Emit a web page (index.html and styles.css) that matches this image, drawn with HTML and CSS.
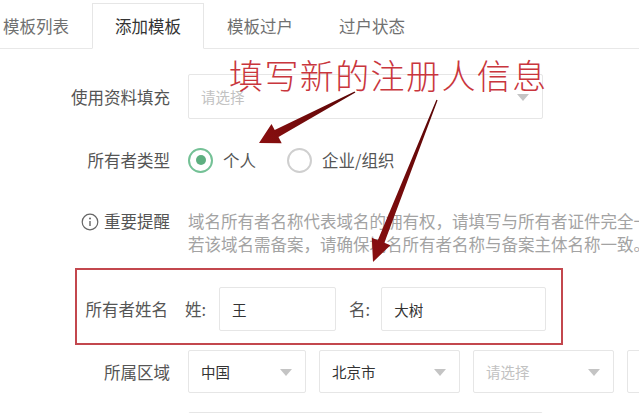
FILE: index.html
```html
<!DOCTYPE html>
<html lang="zh-CN">
<head>
<meta charset="utf-8">
<title>添加模板</title>
<link rel="stylesheet" href="styles.css">
</head>
<body>
<div class="page">
  <nav class="tabs">
    <div class="tab">模板列表</div>
    <div class="tab active">添加模板</div>
    <div class="tab">模板过户</div>
    <div class="tab">过户状态</div>
  </nav>

  <div class="form">
    <div class="row r-fill">
      <div class="label">使用资料填充</div>
      <div class="select s-wide"><span class="placeholder">请选择</span><i class="caret"></i></div>
    </div>

    <div class="row r-type">
      <div class="label">所有者类型</div>
      <div class="radios">
        <span class="radio checked"></span><span class="radio-text">个人</span>
        <span class="radio"></span><span class="radio-text">企业/组织</span>
      </div>
    </div>

    <div class="row r-tip">
      <div class="label tip-label">
        <svg class="info-icon" width="18" height="18" viewBox="0 0 18 18">
          <circle cx="9" cy="9" r="7.8" fill="none" stroke="#666" stroke-width="1.2"/>
          <circle cx="9" cy="5.6" r="1" fill="#666"/>
          <path d="M9 8 V13" stroke="#666" stroke-width="1.4" fill="none"/>
        </svg>
        <span>重要提醒</span>
      </div>
      <div class="tip-text">
        <p>域名所有者名称代表域名的拥有权，请填写与所有者证件完全一致的名称。</p>
        <p>若该域名需备案，请确保域名所有者名称与备案主体名称一致。</p>
      </div>
    </div>

    <div class="row r-name">
      <div class="label name-label">所有者姓名</div>
      <span class="pre">姓:</span>
      <div class="input in-last">王</div>
      <span class="pre pre-first">名:</span>
      <div class="input in-first">大树</div>
    </div>

    <div class="row r-region">
      <div class="label">所属区域</div>
      <div class="selects">
        <div class="select s-1"><span class="value">中国</span><i class="caret"></i></div>
        <div class="select s-2"><span class="value">北京市</span><i class="caret"></i></div>
        <div class="select s-3"><span class="placeholder">请选择</span><i class="caret"></i></div>
        <div class="select s-4"></div>
      </div>
    </div>

    <div class="row r-next">
      <div class="label"></div>
      <div class="select s-wide"></div>
    </div>
  </div>

  <div class="note">填写新的注册人信息</div>
  <svg class="arrows" width="639" height="413" viewBox="0 0 639 413">
    <defs>
      <linearGradient id="ag1" x1="355" y1="92" x2="259" y2="143" gradientUnits="userSpaceOnUse">
        <stop offset="0" stop-color="#5a0606"/>
        <stop offset="1" stop-color="#8a0f10"/>
      </linearGradient>
      <linearGradient id="ag2" x1="437" y1="100" x2="373" y2="262" gradientUnits="userSpaceOnUse">
        <stop offset="0" stop-color="#5a0606"/>
        <stop offset="1" stop-color="#8a0f10"/>
      </linearGradient>
    </defs>
    <polygon fill="url(#ag1)" points="355.4,92.6 278.5,137.1 281.7,143.3 259,143 271.5,123.9 274.7,130.1 354.6,91.4"/>
    <polygon fill="url(#ag2)" points="437.6,100.2 384.4,242.8 390.4,245.2 373,262 371.8,237.8 377.8,240.2 436.4,99.8"/>
  </svg>
</div>
</body>
</html>
```

FILE: styles.css
```css
* { box-sizing: border-box; }
html, body {
  margin: 0;
  padding: 0;
  background: #fff;
  overflow: hidden;
}
body {
  font-family: "Noto Sans CJK SC", "Noto Sans", sans-serif;
  color: #555;
  font-size: 16.5px;
}
.page {
  position: relative;
  width: 639px;
  height: 413px;
  overflow: hidden;
}

/* tabs */
.tabs {
  display: flex;
  height: 49px;
  margin-left: -20px;
  border-bottom: 1px solid #e8e8e8;
}
.tab {
  padding: 0 22px;
  border: 1px solid transparent;
  line-height: 44px;
  margin-top: 3px;
  color: #707070;
  white-space: nowrap;
}
.tab.active {
  border-color: #e6e6e6;
  border-bottom-color: #fff;
  background: #fff;
  color: #333;
  height: 46px;
}

/* form */
.form {
  display: flex;
  flex-direction: column;
}
.row {
  display: flex;
  align-items: center;
}
.label {
  width: 170px;
  flex: none;
  margin-right: 18px;
  text-align: right;
  color: #555;
  white-space: nowrap;
}

.select {
  position: relative;
  border: 1px solid #e6e6e6;
  border-radius: 2px;
  background: #fff;
  display: flex;
  align-items: center;
  padding-left: 12px;
  font-size: 14.5px;
  color: #333;
  flex: none;
}
.placeholder { color: #c2c2c2; }
.caret {
  position: absolute;
  right: 13px;
  top: 50%;
  margin-top: -3px;
  width: 0;
  height: 0;
  border-left: 6px solid transparent;
  border-right: 6px solid transparent;
  border-top: 7px solid #c4c4c4;
}

.r-fill { margin-top: 25px; }
.s-wide { width: 355px; height: 45px; }

.r-type { margin-top: 29px; height: 24px; }
.radios {
  display: flex;
  align-items: center;
}
.radio {
  width: 25px;
  height: 25px;
  border-radius: 50%;
  border: 2px solid #cfcfcf;
  position: relative;
  flex: none;
}
.radio.checked { border-color: #74c196; }
.radio.checked::after {
  content: "";
  position: absolute;
  left: 50%;
  top: 50%;
  width: 10px;
  height: 10px;
  margin: -5px 0 0 -5px;
  border-radius: 50%;
  background: #5daf80;
}
.radio-text {
  margin-left: 10px;
  margin-right: 31px;
  color: #555;
}

.r-tip {
  margin-top: 38px;
  align-items: flex-start;
}
.tip-label {
  display: flex;
  justify-content: flex-end;
  align-items: center;
  line-height: 23px;
}
.info-icon { margin-right: 5px; }
.tip-text {
  color: #a3a3a3;
  white-space: nowrap;
  line-height: 23px;
}
.tip-text p { margin: 0; }

.r-name {
  margin-top: 12px;
  margin-left: 75px;
  width: 488px;
  height: 77px;
  border: 2px solid #c3474e;
  padding-top: 5px;
}
.name-label {
  width: 91px;
  margin-right: 17px;
}
.pre {
  color: #555;
  margin-right: 13px;
  white-space: nowrap;
}
.pre-first { margin-left: 13px; margin-right: 11px; }
.input {
  height: 44px;
  border: 1px solid #e6e6e6;
  border-radius: 2px;
  display: flex;
  align-items: center;
  padding-left: 12px;
  font-size: 14.5px;
  color: #333;
  flex: none;
}
.in-last { width: 117px; }
.in-first { width: 165px; }

.r-region { margin-top: 5px; }
.selects {
  display: flex;
  gap: 13px;
}
.selects .select { height: 43px; }
.s-1 { width: 118px; }
.s-2 { width: 141px; }
.s-3 { width: 141px; }
.s-4 { width: 60px; }

.r-next { margin-top: 19px; }

/* annotation overlay */
.note {
  position: absolute;
  left: 229px;
  top: 58px;
  font-size: 34px;
  line-height: 34px;
  font-weight: 300;
  color: #c9363d;
  white-space: nowrap;
  letter-spacing: 1.4px;
}
.arrows {
  position: absolute;
  left: 0;
  top: 0;
  pointer-events: none;
}
```
